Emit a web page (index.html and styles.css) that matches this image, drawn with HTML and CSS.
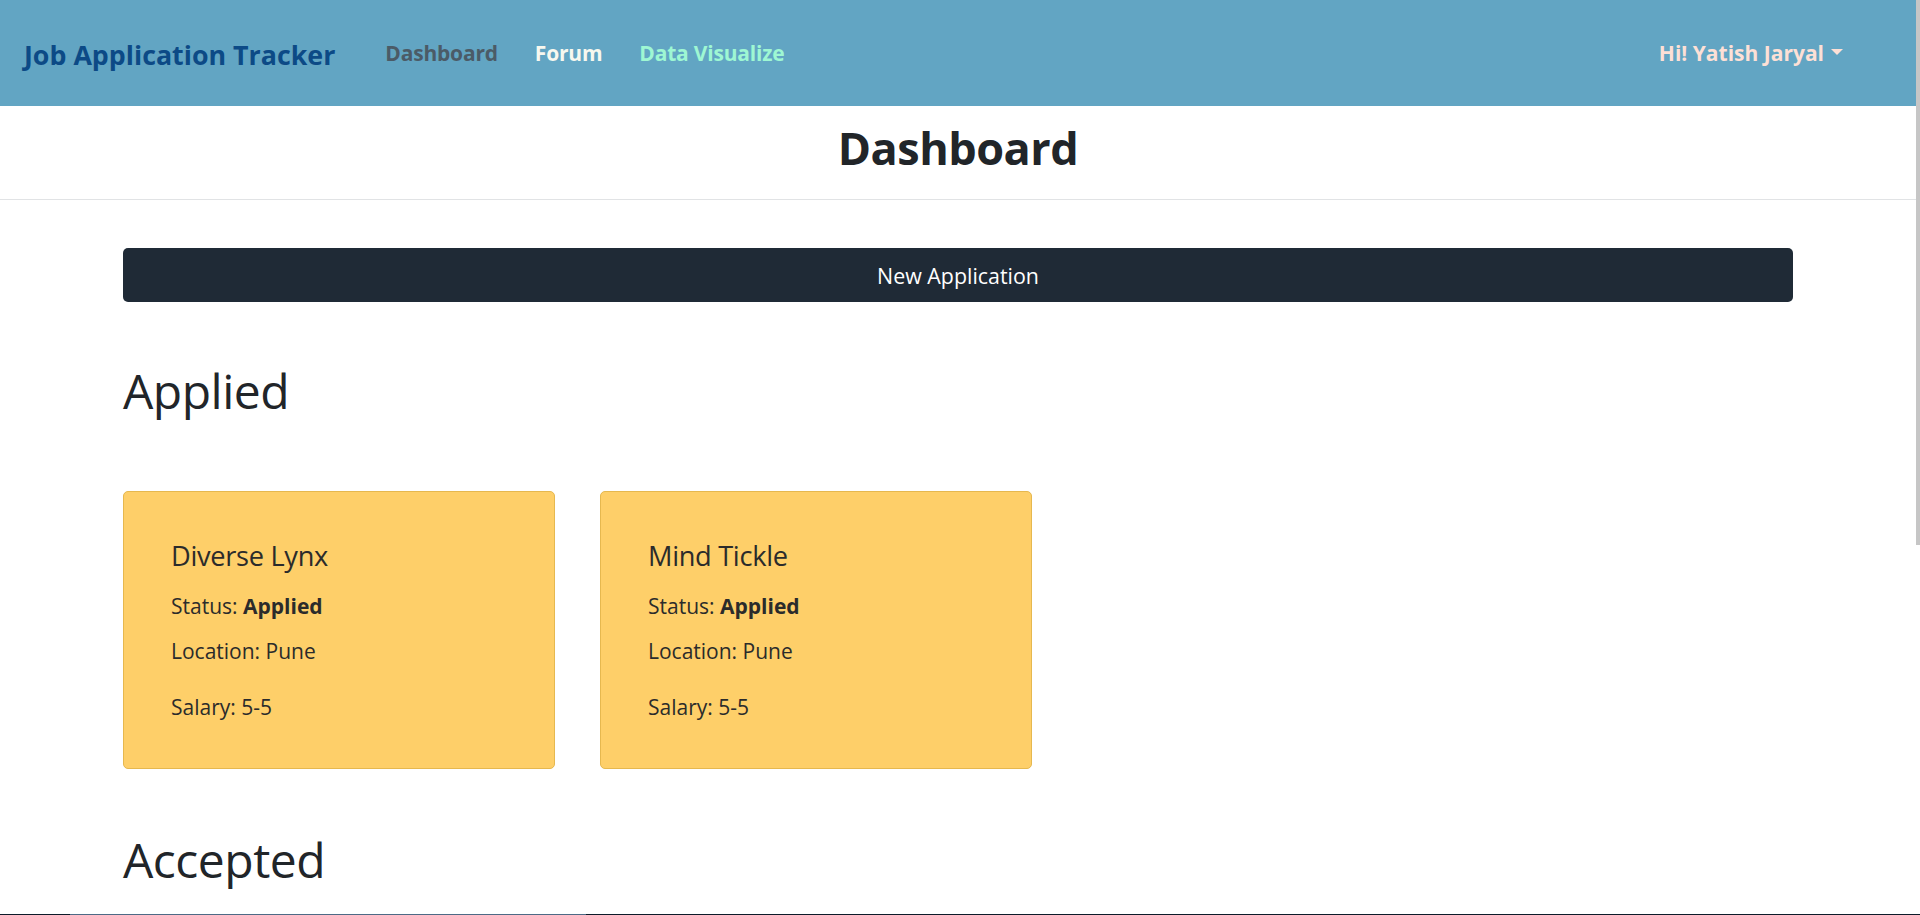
FILE: index.html
```html
<!DOCTYPE html>
<html lang="en">
<head>
<meta charset="utf-8">
<title>Job Application Tracker</title>
<link rel="stylesheet" href="styles.css">
</head>
<body>
<div class="page">
  <header class="navbar">
    <a class="brand" href="#">Job Application Tracker</a>
    <nav class="nav-links">
      <a class="nav-link nav-active" href="#">Dashboard</a>
      <a class="nav-link nav-forum" href="#">Forum</a>
      <a class="nav-link nav-viz" href="#">Data Visualize</a>
    </nav>
    <div class="user-menu"><span>Hi! Yatish Jaryal</span><span class="caret"></span></div>
  </header>

  <div class="title-band">
    <h1 class="page-title">Dashboard</h1>
  </div>

  <main class="container">
    <button class="btn-new" type="button">New Application</button>

    <section class="group">
      <h2 class="group-title">Applied</h2>
      <div class="cards">
        <div class="card">
          <h3 class="card-title">Diverse Lynx</h3>
          <p class="card-line">Status: <b>Applied</b></p>
          <p class="card-line">Location: Pune</p>
          <p class="card-line card-salary">Salary: 5-5</p>
        </div>
        <div class="card">
          <h3 class="card-title">Mind Tickle</h3>
          <p class="card-line">Status: <b>Applied</b></p>
          <p class="card-line">Location: Pune</p>
          <p class="card-line card-salary">Salary: 5-5</p>
        </div>
      </div>
    </section>

    <section class="group group-accepted">
      <h2 class="group-title">Accepted</h2>
    </section>
  </main>
</div>
<div class="scroll-thumb"></div>
<div class="taskbar-edge"></div>
</body>
</html>
```

FILE: styles.css
```css
html, body {
  margin: 0;
  padding: 0;
  overflow: hidden;
  background: #ffffff;
}

body {
  font-family: "Open Sans", "Noto Sans", "DejaVu Sans", sans-serif;
  color: #212529;
}

.page {
  width: 1916px;
}

a {
  text-decoration: none;
}

/* ---------- navbar ---------- */
.navbar {
  height: 106px;
  background: #62a5c3;
  display: flex;
  align-items: center;
  padding: 0 73px 0 24px;
  box-sizing: border-box;
}

.brand {
  font-size: 26.8px;
  font-weight: 700;
  color: #0c4a86;
  line-height: 1;
  margin-top: 4px;
}

.nav-links {
  display: flex;
  align-items: center;
  gap: 37px;
  margin-left: 50px;
}

.nav-link {
  font-size: 21px;
  font-weight: 700;
  line-height: 1;
  letter-spacing: -0.2px;
}

.nav-active { color: #4b5b67; }
.nav-forum { color: #f7f8ef; }
.nav-viz { color: #9ef7d3; }

.user-menu {
  margin-left: auto;
  display: flex;
  align-items: center;
  gap: 7px;
  font-size: 21px;
  font-weight: 700;
  color: #fde0d6;
  line-height: 1;
}

.caret {
  width: 0;
  height: 0;
  border-left: 6px solid transparent;
  border-right: 6px solid transparent;
  border-top: 6px solid #fde0d6;
  margin-top: -3px;
}

/* ---------- title band ---------- */
.title-band {
  box-sizing: content-box;
  height: 80.3px;
  padding-top: 12.7px;
  border-bottom: 1px solid #e1e3e5;
}

.page-title {
  margin: 0;
  text-align: center;
  font-size: 45px;
  line-height: 57.6px;
  letter-spacing: -0.5px;
  font-weight: 700;
  color: #212529;
}

/* ---------- content ---------- */
.container {
  width: 1670px;
  margin: 0 auto;
  padding-top: 48px;
}

.btn-new {
  display: block;
  width: 100%;
  height: 54px;
  border: 0;
  border-radius: 5px;
  background: #1f2a36;
  color: #ffffff;
  font-family: inherit;
  font-size: 21.4px;
  font-weight: 400;
  padding: 1px 0 0;
  cursor: pointer;
}

.group-title {
  margin: 0;
  font-size: 48px;
  line-height: 60px;
  letter-spacing: -0.5px;
  font-weight: 500;
  color: #212529;
}

.group .group-title {
  margin-top: 59.4px;
}

.cards {
  display: flex;
  gap: 45px;
  margin-top: 69.6px;
}

.card {
  width: 432px;
  box-sizing: border-box;
  background: #fecf69;
  border: 1px solid #e6b84f;
  border-radius: 5px;
  padding: 46.45px 47px 44.45px 47px;
  color: #2b2b2b;
}

.card-title {
  margin: 0;
  font-size: 27.2px;
  line-height: 36px;
  letter-spacing: -0.3px;
  font-weight: 500;
}

.card-line {
  margin: 13px 0 0;
  font-size: 21px;
  line-height: 32px;
}

.card-title + .card-line {
  margin-top: 15.4px;
}

.card-line b {
  font-weight: 700;
}

.card-salary {
  margin-top: 24.7px;
}

.group-accepted .group-title {
  margin-top: 60.9px;
}

/* ---------- window chrome ---------- */
.scroll-thumb {
  position: fixed;
  top: 0;
  right: 0;
  width: 4px;
  height: 545px;
  background: #c6c6c6;
}

.taskbar-edge {
  position: fixed;
  left: 0;
  right: 0;
  bottom: 0;
  height: 1px;
  background: linear-gradient(to right, #0d1b2a 0, #0d1b2a 70px, #4d6a86 70px, #4d6a86 586px, #0d1b2a 586px);
}
```
